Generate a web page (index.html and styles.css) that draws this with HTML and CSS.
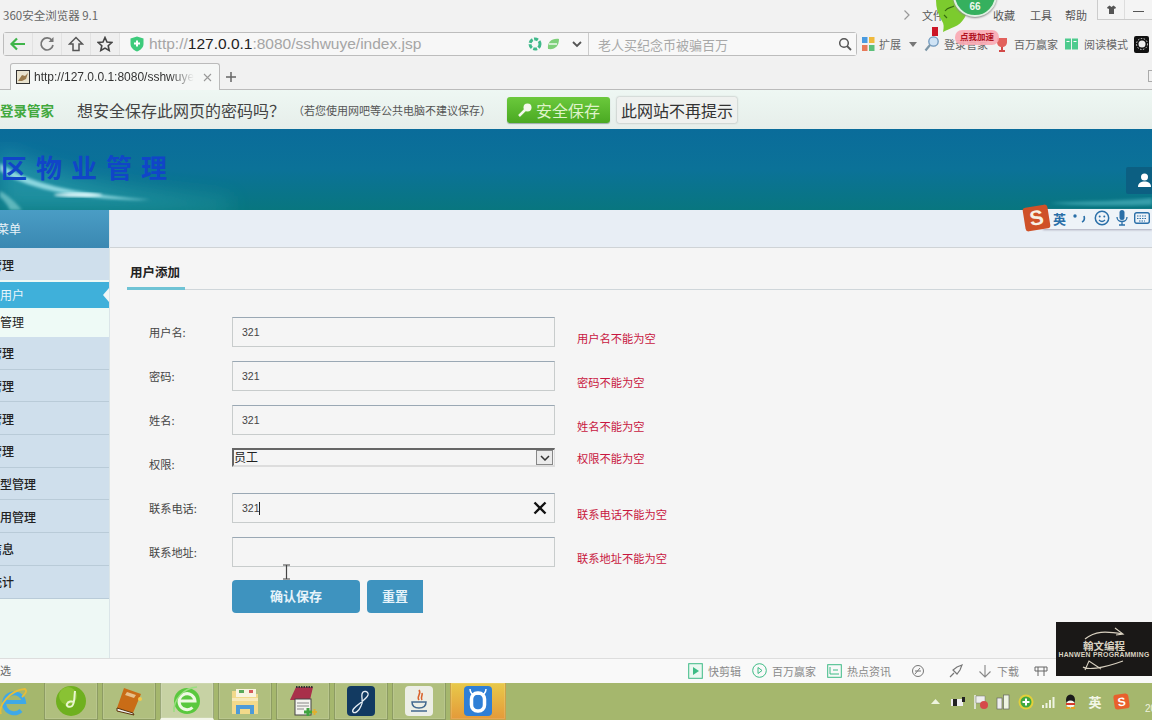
FILE: index.html
```html
<!DOCTYPE html>
<html lang="zh-CN">
<head>
<meta charset="utf-8">
<title>小区物业管理</title>
<link rel="stylesheet" href="styles.css">
</head>
<body>
<div class="screen">
  <div class="titlebar">
    <span class="appname">360安全浏览器 9.1</span>
    <nav class="menu">
      <svg class="chev" width="8" height="12" viewBox="0 0 8 12"><path d="M1.5 1.5 6 6l-4.500 4.500" fill="none" stroke="#999" stroke-width="1.200"/></svg>
      <span class="m-file">文件</span><span class="m-fav">收藏</span><span class="m-tool">工具</span><span class="m-help">帮助</span>
    </nav>
    <div class="winbtns">
      <span class="winbtn"><svg width="11" height="10" viewBox="0 0 11 10"><path d="M3.500 0.500 1 2.500l1 1.500 1-.5V9h5V3.500l1 .5 1-1.500L7.500.5 5.500 2z" fill="#555"/></svg></span>
      <span class="winbtn minbtn"></span>
    </div>
  </div>

  <div class="addrrow">
    <div class="addrbar">
      <span class="navbtn"><svg width="18" height="14" viewBox="0 0 18 14"><path d="M16 7H3M8 1.500 2.500 7 8 12.500" fill="none" stroke="#3fb54a" stroke-width="2.200"/></svg></span>
      <span class="navbtn"><svg width="16" height="16" viewBox="0 0 16 16"><path d="M13 4.500A6 6 0 1 0 14 9" fill="none" stroke="#777" stroke-width="1.700"/><path d="M14.500 1v5h-5z" fill="#777"/></svg></span>
      <span class="navbtn"><svg width="16" height="16" viewBox="0 0 16 16"><path d="M8 1.500 1.500 8H5v6.500h6V8h3.500z" fill="none" stroke="#555" stroke-width="1.500"/></svg></span>
      <span class="navbtn"><svg width="16" height="16" viewBox="0 0 16 16"><path d="m8 1.500 2 4.500 4.800.5-3.600 3.200 1 4.800L8 12.100 3.800 14.500l1-4.800L1.200 6.500 6 6z" fill="none" stroke="#444" stroke-width="1.600"/></svg></span>
      <div class="urlbox">
        <svg class="shield" width="14" height="16" viewBox="0 0 14 16"><path d="M7 .5 13.500 2.500V8c0 3.500-3 6-6.500 7.500C3.500 14 .5 11.500.5 8V2.500z" fill="#3ecb7c"/><path d="M7 4.500v6M4 7.500h6" stroke="#fff" stroke-width="2"/></svg>
        <span class="url">http://<b>127.0.0.1</b>:8080/sshwuye/index.jsp</span>
        <svg class="urlicon" width="14" height="14" viewBox="0 0 14 14"><circle cx="7" cy="7" r="5" fill="none" stroke="#3fb98a" stroke-width="3" stroke-dasharray="4 1.500"/></svg>
        <svg class="urlicon" width="14" height="14" viewBox="0 0 14 14"><path d="M2 12C1 5 6 1 13 2c0 7-4 11-11 10z" fill="#7ed07a"/><path d="M3 7h8" stroke="#fff" stroke-width="1.300"/></svg>
        <svg class="urlcheck" width="10" height="8" viewBox="0 0 10 8"><path d="m1 2 4 4 4-4" fill="none" stroke="#555" stroke-width="1.800"/></svg>
      </div>
      <div class="searchbox">
        <span class="searchtext">老人买纪念币被骗百万</span>
        <svg width="14" height="14" viewBox="0 0 14 14"><circle cx="6" cy="6" r="4.300" fill="none" stroke="#555" stroke-width="1.500"/><path d="m9 9 4 4" stroke="#555" stroke-width="1.800"/></svg>
      </div>
    </div>
    <div class="tools">
      <span class="tool t-ext"><svg width="15" height="16" viewBox="0 0 15 16"><rect x="1" y="1" width="5.500" height="6" fill="#4a9be0"/><rect x="8" y="1" width="5.500" height="6" fill="#f0b93c"/><rect x="1" y="9" width="5.500" height="6" fill="#e87a5a"/><rect x="8" y="9" width="5.500" height="6" fill="#5cc07a"/></svg>扩展<svg class="caret" width="8" height="5" viewBox="0 0 8 5"><path d="M0 0h8L4 5z" fill="#777"/></svg></span>
      <span class="tool t-login"><svg width="15" height="18" viewBox="0 0 15 18"><circle cx="9.500" cy="6.500" r="4.700" fill="#cfe3f5" stroke="#6d97bd" stroke-width="1.300"/><path d="M6 10 1.500 15.500" stroke="#7d97a8" stroke-width="2.200"/></svg>登录管家</span>
      <span class="tool t-win"><svg width="14" height="15" viewBox="0 0 14 15"><path d="M2 1h10v4c0 3-2 5-5 5S2 8 2 5z" fill="#e2615c"/><path d="M4 14h6M7 10v4" stroke="#d24a48" stroke-width="2"/></svg>百万赢家</span>
      <span class="tool t-read"><svg width="15" height="14" viewBox="0 0 15 14"><path d="M1 1.500h6v11H1zM8 1.500h6v11H8z" fill="#4ecb8e"/><path d="M2.500 4.500h3M9.500 4.500h3" stroke="#fff"/></svg>阅读模式</span>
      <span class="blackbox"><svg width="12" height="12" viewBox="0 0 12 12"><circle cx="6" cy="6" r="3.500" fill="#eee"/><circle cx="6" cy="6" r="5.500" fill="none" stroke="#ddd" stroke-dasharray="1.500 1.500"/></svg></span>
    </div>
  </div>

  <div class="tabrow">
    <div class="tab">
      <svg class="favicon" width="14" height="14" viewBox="0 0 14 14"><rect x=".5" y=".5" width="13" height="13" fill="#e9e3cf" stroke="#333"/><path d="M2 11 6 5l3 1 3-3-2 6-4 2z" fill="#9a7a4c"/></svg>
      <span class="tabtitle">http://127.0.0.1:8080/sshwuye/index.jsp</span>
      <svg class="tabclose" width="9" height="9" viewBox="0 0 9 9"><path d="m1 1 7 7M8 1 1 8" stroke="#999" stroke-width="1.100"/></svg>
    </div>
    <svg class="tabplus" width="12" height="12" viewBox="0 0 12 12"><path d="M6 1v10M1 6h10" stroke="#666" stroke-width="1.500"/></svg>
    <span class="tabend"></span>
  </div>

  <div class="savebar">
    <span class="savebrand">登录管家</span>
    <span class="saveask">想安全保存此网页的密码吗？</span>
    <span class="savenote">（若您使用网吧等公共电脑不建议保存）</span>
    <span class="savebtn"><svg width="16" height="16" viewBox="0 0 16 16"><circle cx="10.500" cy="5.500" r="4" fill="#f4f8ec"/><path d="M8 8 2 14" stroke="#f4f8ec" stroke-width="2.500"/></svg>安全保存</span>
    <span class="nosave">此网站不再提示</span>
  </div>

  <header class="pagehead">
    <svg class="swoosh" width="1152" height="81" viewBox="0 0 1152 81">
      <defs><filter id="b1"><feGaussianBlur stdDeviation="1.500"/></filter><filter id="b2"><feGaussianBlur stdDeviation="10"/></filter></defs>
      <path d="M0 20C40 40 100 60 230 72L230 81H0z" fill="#2fa3b0" opacity=".6" filter="url(#b2)"/>
      <path d="M0 34C28 54 70 64 150 71C85 71 30 62 0 42z" fill="#a9eaf0" opacity=".8" filter="url(#b1)"/>
      <path d="M0 62C8 66 14 72 22 81H10C7 75 4 71 0 68z" fill="#8fd8d8" opacity=".6" filter="url(#b1)"/>
      <ellipse cx="78" cy="66" rx="24" ry="1.800" fill="#e9fcff" filter="url(#b1)"/>
      <path d="M1050 74C1090 72 1125 72 1152 69V76C1110 77 1080 77 1050 74z" fill="#6fd0da" opacity=".45" filter="url(#b1)"/>
    </svg>
    <h1 class="sitename">小区物业管理</h1>
    <span class="userbox"><svg width="15" height="15" viewBox="0 0 15 15"><circle cx="7.500" cy="4" r="3.500" fill="#fff"/><path d="M1 14c0-4 3-5.500 6.500-5.500S14 10 14 14z" fill="#fff"/></svg></span>
  </header>

  <div class="page">
    <aside class="sidebar">
      <div class="sidehead"><span class="lab-menu">系统菜单</span></div>
      <ul class="sidelist">
        <li class="s-item s-first"><span class="lab-a">用户管理</span></li>
        <li class="s-active"><span class="lab-b">添加用户</span></li>
        <li class="s-sub"><span class="lab-b">用户管理</span></li>
        <li class="s-item"><span class="lab-a">业主管理</span></li>
        <li class="s-item"><span class="lab-a">房屋管理</span></li>
        <li class="s-item"><span class="lab-a">车位管理</span></li>
        <li class="s-item"><span class="lab-a">收费管理</span></li>
        <li class="s-item"><span class="lab-c">车位类型管理</span></li>
        <li class="s-item"><span class="lab-c">车位使用管理</span></li>
        <li class="s-item"><span class="lab-a">公告信息</span></li>
        <li class="s-item"><span class="lab-a">数据统计</span></li>
      </ul>
    </aside>
    <main class="content">
      <div class="subhead"></div>
      <div class="tabs"><span class="tabname">用户添加</span></div>
      <form class="form">
        <div class="row"><label class="lbl">用户名:</label><input class="inp" value="321"><span class="err">用户名不能为空</span></div>
        <div class="row"><label class="lbl">密码:</label><input class="inp" value="321"><span class="err">密码不能为空</span></div>
        <div class="row"><label class="lbl">姓名:</label><input class="inp" value="321"><span class="err">姓名不能为空</span></div>
        <div class="row"><label class="lbl">权限:</label>
          <div class="selwrap"><span class="sel">员工</span><span class="selarrow"><svg width="10" height="6" viewBox="0 0 10 6"><path d="m1 1 4 4 4-4" fill="none" stroke="#333" stroke-width="1.500"/></svg></span></div>
          <span class="err err-sel">权限不能为空</span></div>
        <div class="row"><label class="lbl">联系电话:</label>
          <div class="inpwrap"><input class="inp" value="321"><span class="caretline"></span>
            <svg class="clear" width="14" height="14" viewBox="0 0 14 14"><path d="m1.500 1.500 11 11M12.500 1.500l-11 11" stroke="#111" stroke-width="2.400"/></svg></div>
          <span class="err">联系电话不能为空</span></div>
        <div class="row"><label class="lbl">联系地址:</label>
          <div class="inpwrap"><input class="inp" value="">
            <svg class="ibeam" width="9" height="16" viewBox="0 0 9 16"><path d="M1 1h7M1 15h7M4.500 1v14" stroke="#444" stroke-width="1.200" fill="none"/></svg></div>
          <span class="err">联系地址不能为空</span></div>
        <div class="actions"><button type="button" class="btn btn-main">确认保存</button><button type="button" class="btn btn-reset">重置</button></div>
      </form>
    </main>
  </div>

  <footer class="statusbar">
    <span class="st-left">完成选</span>
    <div class="st-right">
      <span class="st st1"><svg width="15" height="16" viewBox="0 0 15 16"><rect x=".7" y=".7" width="13.600" height="14.600" fill="#eaf8f1" stroke="#3dbb85"/><path d="m5 4 6 4-6 4z" fill="#3dbb85"/></svg>快剪辑</span>
      <span class="st st2"><svg width="15" height="15" viewBox="0 0 15 15"><circle cx="7.500" cy="7.500" r="6.800" fill="none" stroke="#3dbb85"/><path d="m6 4.500 4 3-4 3z" fill="none" stroke="#3dbb85"/></svg>百万赢家</span>
      <span class="st st3"><svg width="15" height="14" viewBox="0 0 15 14"><rect x=".7" y=".7" width="13.600" height="12.600" fill="none" stroke="#3dbb85"/><path d="M3 3v7h9M6 6h5" fill="none" stroke="#3dbb85"/></svg>热点资讯</span>
      <svg class="st-ico st4" width="14" height="14" viewBox="0 0 14 14"><circle cx="7" cy="7" r="5.500" fill="none" stroke="#777"/><path d="M4 10 9 4M4 7h6" stroke="#777"/></svg>
      <svg class="st-ico st5" width="14" height="14" viewBox="0 0 14 14"><path d="M13 1 8 3 4 6l4 4 3-4zM5 9l-4 4" fill="none" stroke="#777" stroke-width="1.200"/></svg>
      <span class="st st6"><svg width="14" height="14" viewBox="0 0 14 14"><path d="M7 1v12M1.500 7.500 7 13l5.500-5.500" fill="none" stroke="#888" stroke-width="1.100"/></svg>下载</span>
      <svg class="st-ico st7" width="14" height="12" viewBox="0 0 14 12"><path d="M1 2h12v4H1zM4 2v9M10 2v9" fill="none" stroke="#666"/></svg>
    </div>
  </footer>

  <div class="taskbar">
    <span class="startie"><svg width="32" height="32" viewBox="0 0 32 32"><path d="M6 16h20a10 10 0 1 0-3 8.500" fill="none" stroke="#3fa9e8" stroke-width="4"/><path d="M3 28C0 20 12 4 27 3c3 2-1 6-3 8" fill="none" stroke="#e6bd3a" stroke-width="1.800"/></svg></span>
    <span class="task"><svg width="32" height="32" viewBox="0 0 32 32"><circle cx="16" cy="16" r="15" fill="#6fb01f"/><circle cx="13" cy="11" r="9" fill="#a4d44a" opacity=".5"/><path d="M20 6c-1 8 0 12-3 15-3 2-6 0-5-2 1-3 5-3 7-2" fill="none" stroke="#e9f6cf" stroke-width="2"/></svg></span>
    <span class="task"><svg width="30" height="30" viewBox="0 0 30 30"><path d="M10 2 27 8 19 27 3 22z" fill="#c96c16"/><path d="M3 22 19 27l1 2L3 25z" fill="#eee" stroke="#5a3208"/><path d="M13 6l9 3-2 3-9-3z" fill="#e7c08a"/><circle cx="26" cy="13" r="2" fill="#f2c94c"/></svg></span>
    <span class="task task-on"><svg width="32" height="32" viewBox="0 0 32 32"><circle cx="16" cy="16" r="13" fill="#5ac83e"/><path d="M8 16h16a8 8 0 1 0-2.500 6.500" fill="none" stroke="#eef9e2" stroke-width="3"/><path d="M3 27C2 15 12 3 26 2" fill="none" stroke="#9adf80" stroke-width="1.500"/></svg></span>
    <span class="task"><svg width="32" height="30" viewBox="0 0 32 30"><path d="M3 5h10l2 3h14v20H3z" fill="#f2d98a"/><rect x="7" y="3" width="20" height="8" fill="#f8f4e0"/><rect x="10" y="4" width="5" height="3" fill="#5aa85a"/><rect x="20" y="4" width="4" height="3" fill="#d65a5a"/><path d="M3 12h26v3H3z" fill="#f7e9ba"/><path d="M9 28v-7h14v7" fill="none" stroke="#4d9bd8" stroke-width="4"/></svg></span>
    <span class="task"><svg width="30" height="32" viewBox="0 0 30 32"><path d="M8 2h17l-3 13H2z" fill="#a8304a"/><path d="M8 2h17" stroke="#333" stroke-width="2" stroke-dasharray="1.500 1"/><rect x="7" y="14" width="16" height="16" fill="#f4f4ef" stroke="#444"/><path d="M9 18h12M9 21h12M9 24h7" stroke="#888"/><path d="M16 27h8M20 23v8" stroke="#3fa33f" stroke-width="3"/><path d="M24 27h5M26.500 24v6" stroke="#e0b030" stroke-width="2"/></svg></span>
    <span class="task"><svg width="30" height="32" viewBox="0 0 30 32"><rect x="1" y="1" width="28" height="30" rx="4" fill="#123a61"/><path d="M7 27c-3-4 13-11 15-17 1-4-5-5-6-1-1 5 2 7-1 12-2 5-6 8-8 6z" fill="none" stroke="#e7eef5" stroke-width="1.300"/></svg></span>
    <span class="task"><svg width="30" height="32" viewBox="0 0 30 32"><rect x="1" y="1" width="28" height="30" rx="4" fill="#eceee6"/><path d="M15 5c3 4-3 6 0 10M18 8c1 3-2 4 0 7" fill="none" stroke="#d9622b" stroke-width="1.600"/><path d="M8 17c0 4 3 6 7 6s7-2 7-6zM7 26h16" fill="none" stroke="#41688f" stroke-width="1.500"/></svg></span>
    <span class="task task-hot"><svg width="30" height="32" viewBox="0 0 30 32"><rect x="1" y="1" width="28" height="30" rx="4" fill="#2f7fd6"/><path d="M7 4c0 3 1 4 2 5h12c1-1 2-2 2-5" fill="none" stroke="#fff" stroke-width="1.500"/><rect x="8.500" y="8" width="13" height="18" rx="6" fill="none" stroke="#fff" stroke-width="3.500"/></svg></span>
    <div class="tray">
      <span class="ti"><svg width="9" height="5" viewBox="0 0 9 5"><path d="M0 5h9L4.500 0z" fill="#eef3de"/></svg></span>
      <span class="ti"><svg width="16" height="14" viewBox="0 0 16 14"><path d="M1 4h12v7H1z" fill="#eee"/><path d="M3 4h4v7H3z" fill="#222"/><path d="M12 2h3v5h-3z" fill="#222"/></svg></span>
      <span class="ti"><svg width="16" height="16" viewBox="0 0 16 16"><path d="M2 1v14" stroke="#eee" stroke-width="1.500"/><path d="M3 2h9v7H3z" fill="#eee" stroke="#777" stroke-width=".5"/><circle cx="11" cy="11" r="4" fill="#d64a4a"/></svg></span>
      <span class="ti"><svg width="14" height="16" viewBox="0 0 14 16"><rect x="1" y="4" width="5" height="11" fill="#eee" stroke="#666" stroke-width=".7"/><rect x="7.500" y="1" width="5.500" height="14" fill="#eef4e2" stroke="#666" stroke-width=".7"/></svg></span>
      <span class="ti"><svg width="16" height="16" viewBox="0 0 16 16"><circle cx="8" cy="8" r="7.500" fill="#e3d03a"/><circle cx="8" cy="8" r="5.500" fill="#3fa83f"/><path d="M8 4.500v7M4.500 8h7" stroke="#fff" stroke-width="2"/></svg></span>
      <span class="ti"><svg width="15" height="12" viewBox="0 0 15 12"><path d="M1 9h2v3H1zM4.500 7h2v5h-2zM8 4h2v8H8zM11.500 1h2v11h-2z" fill="#eef3e2"/></svg></span>
      <span class="ti"><svg width="15" height="16" viewBox="0 0 15 16"><ellipse cx="7.500" cy="6" rx="4.500" ry="5.500" fill="#1a1a1a"/><ellipse cx="7.500" cy="10" rx="4" ry="3.500" fill="#f5f5f0"/><path d="M3 9h9v2H3z" fill="#d63a2a"/><path d="M3 14h4M8 14h4" stroke="#e6a020" stroke-width="2"/></svg></span>
      <span class="ti ti-ime">英</span>
      <span class="ti ti-s"><span class="slogo-small">S</span></span>
      <span class="clock">2017/3/1</span>
    </div>
  </div>

  <div class="mascot">
    <svg class="leaf" width="62" height="48" viewBox="0 0 62 48"><path d="M4 0h34c-2 14-7 24-16 27-3 1-7 3-11 5 1-5 1-8-1-11C6 15 4 8 4 0z" fill="#7ccb2e"/><path d="M13 11c3-4 6-3 9-5M12 15l3 3" stroke="#356b10" stroke-width="1.200" fill="none"/><rect x="0" y="27" width="6" height="9" fill="#cc1626"/></svg>
    <div class="badge66">66</div>
    <div class="speedup">点我加速</div>
  </div>

  <div class="imebar">
    <span class="slogo">S</span>
    <span class="imech">英</span>
    <svg width="16" height="14" viewBox="0 0 16 14"><circle cx="3" cy="5" r="1.700" fill="#2a6fa8"/><path d="M12 5c1 3 0 5-2 6" fill="none" stroke="#2a6fa8" stroke-width="1.600"/></svg>
    <svg width="16" height="16" viewBox="0 0 16 16"><circle cx="8" cy="8" r="6.700" fill="none" stroke="#2a6fa8" stroke-width="1.500"/><circle cx="5.700" cy="6.500" r="1" fill="#2a6fa8"/><circle cx="10.300" cy="6.500" r="1" fill="#2a6fa8"/><path d="M5 10c2 2 4 2 6 0" fill="none" stroke="#2a6fa8" stroke-width="1.200"/></svg>
    <svg width="12" height="16" viewBox="0 0 12 16"><rect x="3.500" y="0" width="5" height="10" rx="2.500" fill="#2a6fa8"/><path d="M1 7c0 6 10 6 10 0M6 12v3M3 15h6" fill="none" stroke="#2a6fa8" stroke-width="1.300"/></svg>
    <svg width="16" height="12" viewBox="0 0 16 12"><rect x=".7" y=".7" width="14.600" height="10.600" rx="2" fill="none" stroke="#2a6fa8" stroke-width="1.400"/><path d="M3 4h10M3 6.500h10M5 9h6" stroke="#2a6fa8" stroke-dasharray="1.500 1"/></svg>
  </div>

  <div class="watermark">
    <svg width="50" height="14" viewBox="0 0 50 14"><path d="M6 12C16 4 26 4 44 7M36 1l8 6-7 1" fill="none" stroke="#d8d0c0" stroke-width="1.200"/></svg>
    <div class="wm-cn">翰文编程</div>
    <div class="wm-en">HANWEN PROGRAMMING</div>
    <svg width="46" height="12" viewBox="0 0 46 12"><path d="M2 8C6 11 20 10 42 2M4 11l4-9 12 8" fill="none" stroke="#d8d0c0" stroke-width="1.100"/></svg>
  </div>
</div>
</body>
</html>
```

FILE: styles.css
```css
* { box-sizing: border-box; }
html, body { margin: 0; padding: 0; }
body { font-family: "Noto Sans CJK SC", "Liberation Sans", sans-serif; background: #f5f5f5; }
ul { list-style: none; margin: 0; padding: 0; }
h1 { margin: 0; }

.screen { position: relative; width: 1152px; height: 720px; overflow: hidden; display: flex; flex-direction: column; background: #f5f5f5; }

.titlebar { height: 30px; flex: none; display: flex; align-items: center; background: #f2f2f2; padding-left: 3px; font-size: 11px; color: #666; }
.appname { color: #666; font-size: 11.500px; }
.menu { margin-left: auto; display: flex; align-items: center; color: #555; }
.chev { margin-right: 11px; }
.m-file { width: 71px; }
.m-fav { width: 37px; }
.m-tool { width: 35px; }
.m-help { width: 32px; }
.winbtns { display: flex; height: 20px; margin-top: -10px; border: 1px solid #ccc; border-top: 0; border-right: 0; background: #f4f4f4; width: 55px; }
.winbtn { width: 27px; display: flex; align-items: center; justify-content: center; border-right: 1px solid #ddd; }
.minbtn { position: relative; border: 0; }
.minbtn::after { content: ""; width: 11px; height: 1px; background: #555; margin-top: 3px; }

.addrrow { height: 28px; flex: none; display: flex; align-items: flex-start; background: #f2f2f2; padding: 2px 0 0 3px; }
.addrbar { width: 854px; height: 24px; flex: none; display: flex; align-items: stretch; border: 1px solid #bdbdbd; border-radius: 3px; background: #f7f7f7; }
.navbtn { width: 29px; flex: none; display: flex; align-items: center; justify-content: center; background: #efefef; border-right: 1px solid #e2e2e2; }
.urlbox { width: 468px; flex: none; display: flex; align-items: center; padding-left: 10px; }
.shield { flex: none; }
.url { font-family: "Liberation Sans", sans-serif; font-size: 15.500px; color: #a5a5a5; margin-left: 5px; width: 379px; white-space: nowrap; }
.url b { font-weight: 400; color: #222; }
.urlicon { margin-right: 4px; flex: none; }
.urlcheck { margin-left: 8px; flex: none; }
.searchbox { flex: 1; display: flex; align-items: center; justify-content: space-between; padding: 0 4px 0 9px; border-left: 1px solid #ccc; background: #f8f8f8; }
.searchtext { font-size: 13px; color: #a8a8a8; }
.tools { display: flex; align-items: center; height: 24px; font-size: 11px; color: #666; }
.tool { display: inline-flex; align-items: center; white-space: nowrap; }
.t-ext { margin-left: 4px; width: 63px; }
.t-ext svg:first-child { margin-right: 3px; }
.caret { margin-left: 8px; }
.t-login { width: 71px; }
.t-login svg, .t-win svg, .t-read svg { margin-right: 5px; }
.t-win { width: 69px; }
.t-read { width: 70px; }
.blackbox { width: 15px; height: 17px; background: #111; border-radius: 2px; display: flex; align-items: center; justify-content: center; }

.tabrow { height: 32px; flex: none; display: flex; align-items: flex-end; background: #f1f1f1; border-bottom: 1px solid #bbb; padding-left: 10px; position: relative; }
.tab { width: 210px; height: 27px; margin-bottom: -1px; display: flex; align-items: center; padding: 0 7px 0 5px; background: #f5f7f6; border: 1px solid #bbb; border-bottom: 0; border-radius: 3px 3px 0 0; flex: none; }
.favicon { flex: none; }
.tabtitle { font-family: "Liberation Sans", sans-serif; font-size: 12px; color: #333; margin-left: 4px; width: 160px; overflow: hidden; white-space: nowrap; flex: none; -webkit-mask-image: linear-gradient(90deg, #000 85%, transparent); mask-image: linear-gradient(90deg, #000 85%, transparent); }
.tabclose { margin-left: 9px; flex: none; }
.tabplus { margin: 0 0 6px 5px; }
.tabend { position: absolute; right: 0; top: 12px; width: 4px; height: 12px; border: 1px solid #aaa; border-right: 0; }

.savebar { height: 39px; flex: none; display: flex; align-items: center; background: linear-gradient(#eef7f3, #e6eeea); position: relative; }
.savebrand { width: 77px; font-size: 13.500px; font-weight: 700; color: #41a83d; white-space: nowrap; }
.saveask { width: 216px; font-size: 16px; color: #444; white-space: nowrap; }
.savenote { width: 214px; font-size: 11px; color: #555; white-space: nowrap; }
.savebtn { width: 103px; height: 26px; display: flex; align-items: center; justify-content: center; gap: 3px; font-size: 16px; color: #dff3c9; background: linear-gradient(#6bc93c, #4aa922); border-radius: 3px; box-shadow: 0 1px 1px #9aa; }
.nosave { width: 120px; height: 26px; margin-left: 7px; display: flex; align-items: center; justify-content: center; font-size: 16px; color: #333; background: #eff1ef; border-radius: 2px; box-shadow: 0 0 2px #999; }

.pagehead { height: 81px; flex: none; position: relative; overflow: hidden; background: linear-gradient(180deg, #0a6c9a 0%, #0b7298 50%, #08767f 100%); display: flex; align-items: center; justify-content: space-between; }
.swoosh { position: absolute; left: 0; top: 0; }
.sitename { position: relative; margin-left: -34px; font-size: 26px; font-weight: 700; letter-spacing: 9px; color: #1145c8; white-space: nowrap; margin-top: -7px; }
.userbox { position: relative; width: 26px; height: 27px; background: #0c5f82; border-radius: 2px 0 0 2px; display: flex; align-items: center; justify-content: flex-end; padding-right: 0; margin-top: 22px; }

.page { flex: 1; display: flex; min-height: 0; }
.sidebar { width: 110px; flex: none; background: #eef8f5; border-right: 1px solid #dbe5e8; }
.sidehead { height: 38px; display: flex; align-items: center; padding-bottom: 2px; background: linear-gradient(#4a9dc5, #3a88b2); color: #e8f2f8; font-size: 12px; white-space: nowrap; }
.lab-menu { margin-left: -27px; }
.sidelist { font-size: 12px; color: #222; white-space: nowrap; }
.s-item { height: 32.700px; display: flex; align-items: center; background: #cfdfec; border-bottom: 1px solid #b9cbd8; }
.s-first { height: 32px; border-bottom: 0; margin-bottom: 2px; }
.s-active { height: 26px; position: relative; display: flex; align-items: center; padding-bottom: 2px; background: #3fb0da; color: #eaf7fc; }
.s-active::after { content: ""; position: absolute; right: 0; top: 6px; border: 7px solid transparent; border-right: 6px solid #f2f6f6; border-left: 0; }
.s-sub { height: 29px; display: flex; align-items: center; padding-bottom: 2px; background: #eefaf6; }
.lab-a { margin-left: -34px; font-weight: 500; }
.lab-b { margin-left: -24px; }
.lab-c { margin-left: -36px; font-weight: 500; }

.content { flex: 1; min-width: 0; background: #f5f5f5; }
.subhead { height: 38px; background: #e8eef5; border-bottom: 1px solid #cfd3d6; }
.tabs { margin: 0 0 0 17px; height: 42px; padding: 15px 0 0 3px; border-bottom: 1px solid #cfd6da; position: relative; }
.tabs::after { content: ""; position: absolute; left: 0; bottom: -1px; width: 58px; height: 3px; background: #6fc3d5; }
.tabname { display: block; font-size: 12.500px; font-weight: 700; line-height: 18px; color: #222; }

.form { padding: 27px 0 0 39px; display: flex; flex-direction: column; gap: 14px; }
.row { position: relative; display: flex; height: 30px; }
.lbl { width: 83px; flex: none; font-size: 11.200px; color: #444; line-height: 30px; }
.inp { display: block; width: 323px; height: 30px; padding: 1px 9px; flex: none; font-family: "Liberation Sans", sans-serif; font-size: 10.500px; color: #444; background: #f5f5f5; border: 1px solid #c8cccc; border-top-color: #9aa8b4; outline: 0; }
.inpwrap { position: relative; width: 323px; flex: none; }
.caretline { position: absolute; left: 27px; top: 9px; width: 1px; height: 13px; background: #222; }
.clear { position: absolute; left: 301px; top: 8px; }
.ibeam { position: absolute; left: 50px; top: 27px; }
.selwrap { position: relative; width: 323px; height: 19px; margin-top: -1px; flex: none; display: flex; align-items: flex-start; border: 2px solid #ddd; border-top-color: #666; border-left-color: #666; border-right-width: 1px; background: #f5f5f5; }
.sel { font-size: 12px; line-height: 14px; color: #222; }
.selarrow { position: absolute; right: 1px; top: 0; width: 17px; height: 15px; display: flex; align-items: center; justify-content: center; background: #ebebeb; border: 1px solid #888; }
.err { margin: 14px 0 0 22px; font-size: 11.250px; line-height: 15px; color: #c8173f; white-space: nowrap; }
.err-sel { margin-top: 2px; }
.actions { display: flex; gap: 7px; margin: -1px 0 0 83px; }
.btn { height: 33px; border: 0; padding: 0 0 2px; font-family: inherit; font-size: 13px; font-weight: 700; color: #e6f3fa; background: #3e93bf; }
.btn-main { width: 128px; border-radius: 4px; }
.btn-reset { width: 56px; border-radius: 4px 0 0 4px; }

.statusbar { height: 25px; flex: none; display: flex; align-items: center; background: #f9f9f9; border-top: 1px solid #ddd; position: relative; font-size: 11px; color: #8a8a8a; }
.st-left { margin-left: -22px; margin-top: -2px; color: #666; font-size: 11px; }
.st-right { position: absolute; left: 688px; top: 0; height: 23px; display: flex; align-items: center; }
.st { display: inline-flex; align-items: center; gap: 5px; white-space: nowrap; }
.st1 { width: 64px; }
.st2 { width: 75px; }
.st3 { width: 84px; }
.st-ico { flex: none; }
.st4 { margin-right: 24px; }
.st5 { margin-right: 15px; }
.st6 { width: 56px; }

.taskbar { height: 37px; flex: none; display: flex; align-items: stretch; background: #a5b76d; gap: 4px; }
.startie { width: 40px; display: flex; align-items: center; margin-left: -2px; margin-right: 2px; flex: none; }
.task { width: 54px; flex: none; display: flex; align-items: center; justify-content: center; background: rgba(255,255,255,.12); border: 1px solid rgba(90,105,60,.4); border-top: 0; box-shadow: inset 0 0 0 1px rgba(255,255,255,.12); }
.task-on { background: rgba(255,255,255,.38); border-bottom: 2px solid #f2f5e8; }
.task-hot { width: 56px; background: linear-gradient(#e8c94a, #e49a3a); border-color: #c9a24a; }
.tray { margin-left: auto; display: flex; align-items: center; color: #fff; }
.ti { width: 22.500px; display: flex; align-items: center; justify-content: center; flex: none; }
.ti-ime { width: 26px; font-size: 13px; color: #f3f6e6; font-weight: 700; }
.ti-s { width: 26px; }
.slogo-small { width: 15px; height: 15px; display: flex; align-items: center; justify-content: center; background: #e8602c; color: #fff; font: 700 12px "Liberation Sans", sans-serif; border-radius: 3px; transform: rotate(-8deg); }
.clock { width: 7px; margin-left: 11px; overflow: hidden; white-space: nowrap; font: 10px "Liberation Sans", sans-serif; color: #eef2de; padding-top: 13px; }

.mascot { position: absolute; left: 932px; top: 0; width: 70px; height: 46px; }
.leaf { position: absolute; left: 0; top: 0; }
.badge66 { position: absolute; left: 21px; top: -27px; width: 44px; height: 44px; border-radius: 50%; background: #35b05e; border: 2px solid #dff0e2; box-shadow: 0 1px 2px #888; color: #eef8ee; font: 700 10px/10px "Liberation Sans", sans-serif; text-align: center; padding-top: 27px; }
.speedup { position: absolute; left: 23px; top: 30px; width: 44px; height: 15px; background: rgba(250,170,180,.92); border-radius: 7px; color: #b0101e; font-size: 8.500px; font-weight: 700; line-height: 13px; text-align: center; white-space: nowrap; }

.imebar { position: absolute; left: 1023px; top: 206px; width: 129px; height: 24px; padding-left: 1px; display: flex; align-items: center; gap: 6px; color: #2a6fa8; }
.imebar::before { content: ""; position: absolute; left: 20px; right: 0; top: 3px; bottom: 1px; background: #eef3f8; box-shadow: 0 1px 2px #aab; }
.imebar > * { position: relative; flex: none; }
.slogo { width: 25px; height: 24px; margin-right: -2px; display: flex; align-items: center; justify-content: center; background: #cf5128; color: #f7f1e6; font: 700 21px "Liberation Sans", sans-serif; border-radius: 3px; transform: rotate(-9deg); }
.imech { font-size: 13px; font-weight: 700; }

.watermark { position: absolute; left: 1056px; top: 622px; width: 96px; height: 54px; background: #1a1817; color: #d9d2c2; display: flex; flex-direction: column; align-items: center; justify-content: center; line-height: 1; }
.wm-cn { font-size: 10.500px; font-weight: 700; line-height: 10px; }
.wm-en { font: 700 6.800px/8px "Liberation Sans", sans-serif; letter-spacing: .3px; white-space: nowrap; }
```
